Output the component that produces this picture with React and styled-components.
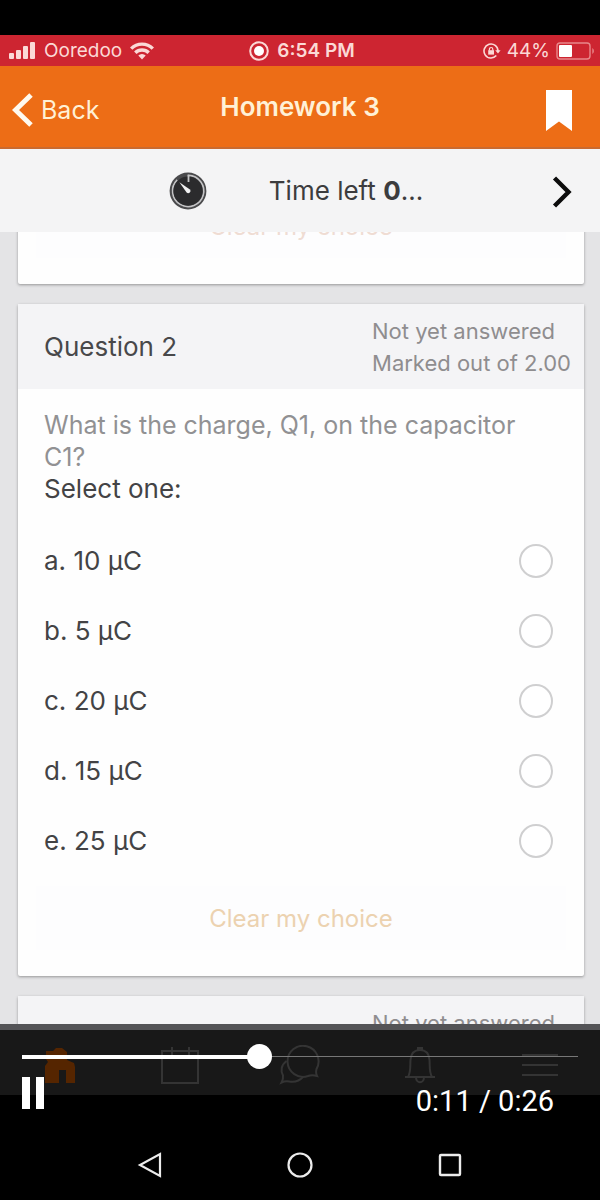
import React, { useState } from "react";
import styled, { createGlobalStyle } from "styled-components";

const GlobalStyle = createGlobalStyle`
  * {
    box-sizing: border-box;
  }

  body {
    margin: 0;
    background: #000000;
    font-family: Inter, "Liberation Sans", sans-serif;
  }

  button {
    border: none;
    background: none;
    padding: 0;
    font-family: inherit;
    color: inherit;
    cursor: pointer;
  }

  svg {
    display: block;
  }
`;

const Screen = styled.div`
  height: 100vh;
  padding-top: 35px;
  display: flex;
  flex-direction: column;
  background: #000000;
`;

/* ---------- status bar ---------- */

const StatusBar = styled.div`
  display: grid;
  grid-template-columns: 1fr auto 1fr;
  align-items: center;
  height: 31px;
  padding: 0 5px 0 9px;
  background: #cd2531;
  color: #fbd9d6;
  font-size: 19px;
`;

const StatusGroup = styled.div`
  display: flex;
  align-items: center;
  justify-content: ${(props) => props.$align || "flex-start"};
  gap: ${(props) => props.$gap || "8px"};
`;

const Clock = styled.span`
  font-weight: 600;
`;

/* ---------- header ---------- */

const Header = styled.header`
  display: grid;
  grid-template-columns: 1fr auto 1fr;
  align-items: center;
  height: 83px;
  padding: 0 28px 0 12px;
  background: #ed6d16;
  border-bottom: 2px solid #c96a30;
  color: #fff1d6;
`;

const BackButton = styled.button`
  display: flex;
  align-items: center;
  gap: 8px;
  padding-top: 6px;
  font-size: 25px;
`;

const Title = styled.h1`
  margin: 0;
  padding-left: 16px;
  font-size: 26px;
  font-weight: 600;
`;

const BookmarkButton = styled.button`
  justify-self: end;
  padding-top: 8px;
`;

/* ---------- timer ---------- */

const TimerBar = styled.div`
  display: grid;
  grid-template-columns: 1fr auto 1fr;
  align-items: center;
  flex-shrink: 0;
  height: 83px;
  padding: 0 28px 0 20px;
  background: #f4f4f5;
`;

const Timer = styled.div`
  grid-column: 2;
  display: flex;
  align-items: center;
  gap: 62px;
  font-size: 26px;
  color: #3c3c3e;
`;

const NextButton = styled.button`
  justify-self: end;
  padding-top: 2px;
`;

/* ---------- questions ---------- */

const QuestionList = styled.main`
  flex: 1;
  min-height: 0;
  overflow: hidden;
  padding: 0 16px 0 18px;
  display: flex;
  flex-direction: column;
  gap: 20px;
  background: #e4e4e6;
`;

const Card = styled.section`
  flex-shrink: 0;
  margin-top: ${(props) => (props.$scrolled ? "-48px" : "0")};
  padding-bottom: 26px;
  background: #fefefe;
  border-radius: 2px;
  box-shadow: 0 1px 3px rgba(0, 0, 0, 0.35);
`;

const CardHeader = styled.div`
  display: flex;
  align-items: center;
  justify-content: space-between;
  height: 85px;
  padding: 0 13px 0 26px;
  background: #f4f4f6;
`;

const QuestionNumber = styled.h2`
  margin: 0;
  font-size: 26px;
  font-weight: 400;
  color: #48484a;
`;

const QuestionState = styled.div`
  margin-left: auto;
  font-size: 22px;
  line-height: 32px;
  color: #8f8d8f;
`;

const QuestionBody = styled.fieldset`
  margin: 0;
  border: none;
  padding: 20px 26px 0;
  font-size: 26px;
  line-height: 32px;
`;

const QuestionText = styled.p`
  margin: 0;
  font-size: 25px;
  color: #919193;
`;

const Prompt = styled.p`
  margin: 0 0 21px;
  color: #434345;
`;

const Option = styled.label`
  display: flex;
  align-items: center;
  justify-content: space-between;
  height: 70px;
  padding-right: 5px;
  color: #434345;
`;

const Radio = styled.input`
  appearance: none;
  width: 34px;
  height: 34px;
  margin: 0;
  border: 2px solid #cfcfd0;
  border-radius: 50%;
  background: #ffffff;

  &:checked {
    border: 10px solid #ed6d16;
  }
`;

const ClearButton = styled.button`
  display: block;
  width: calc(100% - 36px);
  height: 64px;
  margin: 10px 18px 0;
  background: #fdfdfe;
  font-size: 24px;
  color: ${(props) => (props.$faded ? "#efdcd3" : "#ecd2b0")};
`;

/* ---------- player ---------- */

const Player = styled.div`
  position: relative;
  flex-shrink: 0;
  height: 106px;
`;

const TabBar = styled.nav`
  display: grid;
  grid-template-columns: repeat(5, 1fr);
  align-items: center;
  height: 71px;
  padding-top: 4px;
  border-top: 6px solid #545457;
  background: #181818;
`;

const Tab = styled.button`
  display: flex;
  justify-content: center;
  color: ${(props) => (props.$active ? "#552500" : "#343434")};
`;

const Controls = styled.div`
  position: absolute;
  inset: 20px 22px 0;
`;

const SeekBar = styled.input`
  appearance: none;
  display: block;
  width: 100%;
  height: 25px;
  margin: 0;
  background: linear-gradient(#ffffff, #ffffff) left center /
      ${(props) => props.$played}% 4px no-repeat,
    linear-gradient(#777777, #777777) center / 100% 1px no-repeat;

  &::-webkit-slider-thumb {
    appearance: none;
    width: 25px;
    height: 25px;
    border-radius: 50%;
    background: #ffffff;
  }
`;

const ControlsRow = styled.div`
  display: flex;
  align-items: flex-start;
  justify-content: space-between;
  margin-top: 8px;
  padding-right: 24px;
`;

const Time = styled.span`
  padding-top: 7px;
  font-family: Roboto, sans-serif;
  font-size: 29px;
  line-height: 34px;
  color: #ffffff;
`;

const SystemNav = styled.nav`
  display: grid;
  grid-template-columns: repeat(3, 1fr);
  align-items: center;
  justify-items: center;
  flex-shrink: 0;
  height: 70px;
  padding: 0 75px;
  color: #ececec;
`;

/* ---------- icons ---------- */

const SignalIcon = () => (
  <svg width="27" height="17" viewBox="0 0 27 17" fill="currentColor">
    <rect x="0" y="11" width="5" height="6" rx="1" />
    <rect x="7" y="8" width="5" height="9" rx="1" />
    <rect x="14" y="4" width="5" height="13" rx="1" />
    <rect x="21" y="0" width="5" height="17" rx="1" />
  </svg>
);

const WifiIcon = () => (
  <svg width="24" height="18" viewBox="0 0 24 18" fill="none" stroke="currentColor" strokeWidth="3.4">
    <path d="M1.2 6.6a15.3 15.3 0 0 1 21.6 0" />
    <path d="M5.3 10.8a9.5 9.5 0 0 1 13.4 0" />
    <path d="M12 17.4 8.3 13.6a5.3 5.3 0 0 1 7.4 0z" fill="currentColor" stroke="none" />
  </svg>
);

const RecordIcon = () => (
  <svg width="20" height="20" viewBox="0 0 20 20" fill="none" stroke="currentColor" strokeWidth="2">
    <circle cx="10" cy="10" r="8.8" />
    <circle cx="10" cy="10" r="5" fill="#ffffff" stroke="none" />
  </svg>
);

const RotationLockIcon = () => (
  <svg width="18" height="16" viewBox="0 0 18 16" fill="none" stroke="currentColor" strokeWidth="1.6">
    <path d="M13.3 12.6A7 7 0 1 1 15 8" />
    <path d="M12.2 7.2h5.4L15 10.6z" fill="currentColor" stroke="none" />
    <rect x="5.2" y="7.2" width="5.8" height="4.4" fill="currentColor" stroke="none" />
    <path d="M6.4 7.4V6.2a1.7 1.7 0 0 1 3.4 0v1.2" strokeWidth="1.2" />
  </svg>
);

const BatteryIcon = () => (
  <svg width="39" height="18" viewBox="0 0 39 18" fill="none">
    <rect x="1" y="1" width="33" height="16" rx="3" stroke="#e8878a" strokeWidth="1.4" />
    <rect x="3" y="3" width="13" height="12" rx="1" fill="#ffffff" />
    <path d="M36.3 6v6a3.6 3.6 0 0 0 0-6z" fill="#e8878a" />
  </svg>
);

const BackIcon = () => (
  <svg width="21" height="34" viewBox="0 0 21 34" fill="none" stroke="#fffaf0" strokeWidth="5">
    <path d="M19 2 3.5 17 19 32" />
  </svg>
);

const BookmarkIcon = () => (
  <svg width="26" height="41" viewBox="0 0 26 41" fill="#ffffff">
    <path d="M0 0h26v41L13 31.5 0 41z" />
  </svg>
);

const StopwatchIcon = () => (
  <svg width="38" height="38" viewBox="0 0 38 38" fill="none">
    <circle cx="19" cy="19" r="18.4" fill="#4a4a4c" />
    <path d="M19.5 10V3.4A15.6 15.6 0 1 1 8.2 7.9" stroke="#c4c4c6" strokeWidth="1.6" />
    <circle cx="19" cy="19" r="14.6" fill="#2b2b2d" />
    <path d="M19.5 2.8V10" stroke="#c4c4c6" strokeWidth="1.8" />
    <path d="M10.4 10.2 20.9 17.4a2.3 2.3 0 0 1-3.3 3.2z" fill="#f2f2f2" />
  </svg>
);

const NextIcon = () => (
  <svg width="20" height="32" viewBox="0 0 20 32" fill="none" stroke="#0c0c0c" strokeWidth="4.4">
    <path d="M2.5 2 16.5 16 2.5 30" />
  </svg>
);

const HomeIcon = () => (
  <svg width="34" height="38" viewBox="0 0 34 38" fill="currentColor">
    <path d="M3 5h7l3-3h6l5 4v8l7 3 1 4v16H23V24h-7v13H2V20l3-4-2-3z" />
  </svg>
);

const CalendarIcon = () => (
  <svg width="38" height="38" viewBox="0 0 38 38" fill="none" stroke="currentColor" strokeWidth="2">
    <path d="M1 5h36v32H1zM11 1v8M28 1v8" />
  </svg>
);

const ChatIcon = () => (
  <svg width="42" height="40" viewBox="0 0 42 40" fill="none" stroke="currentColor" strokeWidth="2">
    <path d="M37.500 24A15.500 15.500 0 1 0 29 31q4-1.500 9 0-1.500-3-.5-7z" />
    <path d="M7.500 16C2 20 1.500 26 4 30.500q.5 3-1.500 7 4-2 8-1 8 1.500 14-5" />
  </svg>
);

const BellIcon = () => (
  <svg width="34" height="38" viewBox="0 0 34 38" fill="none" stroke="currentColor" strokeWidth="2">
    <path d="M2 31h30M5 31c3-5 2-10 2.500-17C8 7 12 4 17 4s9 3 9.500 10c.5 7-.5 12 2.500 17" />
    <path d="M15 4V2h4v2M13 31c0 7 8 7 8 0" />
  </svg>
);

const MenuIcon = () => (
  <svg width="38" height="26" viewBox="0 0 38 26" fill="none" stroke="currentColor" strokeWidth="2">
    <path d="M1 3h36M1 13h36M1 23h36" />
  </svg>
);

const PauseIcon = () => (
  <svg width="22" height="32" viewBox="0 0 22 32" fill="#ffffff">
    <rect width="8" height="32" />
    <rect x="14" width="8" height="32" />
  </svg>
);

const PlayIcon = () => (
  <svg width="22" height="32" viewBox="0 0 22 32" fill="#ffffff">
    <path d="M0 0v32l22-16z" />
  </svg>
);

const NavBackIcon = () => (
  <svg width="26" height="26" viewBox="0 0 26 26" fill="none" stroke="currentColor" strokeWidth="2.200">
    <path d="M23 2v22L3 13z" />
  </svg>
);

const NavHomeIcon = () => (
  <svg width="26" height="26" viewBox="0 0 26 26" fill="none" stroke="currentColor" strokeWidth="2.200">
    <circle cx="13" cy="13" r="11.500" />
  </svg>
);

const NavRecentIcon = () => (
  <svg width="24" height="24" viewBox="0 0 24 24" fill="none" stroke="currentColor" strokeWidth="2.400">
    <rect x="2" y="2" width="20" height="20" rx="1" />
  </svg>
);

const options = [
  { id: "a", label: "a. 10 µC" },
  { id: "b", label: "b. 5 µC" },
  { id: "c", label: "c. 20 µC" },
  { id: "d", label: "d. 15 µC" },
  { id: "e", label: "e. 25 µC" },
];

const duration = 26;

const tabs = [
  { name: "Home", Icon: HomeIcon },
  { name: "Calendar", Icon: CalendarIcon },
  { name: "Messages", Icon: ChatIcon },
  { name: "Notifications", Icon: BellIcon },
  { name: "More", Icon: MenuIcon },
];

const formatTime = (seconds) => "0:" + String(seconds).padStart(2, "0");

export const App = () => {
  const [answer, setAnswer] = useState("");
  const [position, setPosition] = useState(11);
  const [playing, setPlaying] = useState(true);

  return (
    <>
      <GlobalStyle />
      <Screen>
        <StatusBar>
          <StatusGroup>
            <SignalIcon />
            <span>Ooredoo</span>
            <WifiIcon />
          </StatusGroup>
          <StatusGroup>
            <RecordIcon />
            <Clock>6:54 PM</Clock>
          </StatusGroup>
          <StatusGroup $align="flex-end" $gap="6px">
            <RotationLockIcon />
            <span>44%</span>
            <BatteryIcon />
          </StatusGroup>
        </StatusBar>

        <Header>
          <BackButton>
            <BackIcon />
            Back
          </BackButton>
          <Title>Homework 3</Title>
          <BookmarkButton aria-label="Bookmark">
            <BookmarkIcon />
          </BookmarkButton>
        </Header>

        <TimerBar>
          <Timer>
            <StopwatchIcon />
            <span>
              Time left <b>0</b>...
            </span>
          </Timer>
          <NextButton aria-label="Next">
            <NextIcon />
          </NextButton>
        </TimerBar>

        <QuestionList>
          <Card $scrolled>
            <ClearButton $faded>Clear my choice</ClearButton>
          </Card>

          <Card>
            <CardHeader>
              <QuestionNumber>Question 2</QuestionNumber>
              <QuestionState>
                Not yet answered
                <br />
                Marked out of 2.00
              </QuestionState>
            </CardHeader>
            <QuestionBody aria-label="Question 2">
              <QuestionText>What is the charge, Q1, on the capacitor C1?</QuestionText>
              <Prompt>Select one:</Prompt>
              {options.map((option) => (
                <Option key={option.id}>
                  {option.label}
                  <Radio
                    type="radio"
                    name="answer"
                    value={option.id}
                    checked={answer === option.id}
                    onChange={(event) => setAnswer(event.target.value)}
                  />
                </Option>
              ))}
            </QuestionBody>
            <ClearButton onClick={() => setAnswer("")}>Clear my choice</ClearButton>
          </Card>

          <Card>
            <CardHeader>
              <QuestionState>
                Not yet answered
                <br />
                Marked out of 2.00
              </QuestionState>
            </CardHeader>
          </Card>
        </QuestionList>

        <Player>
          <TabBar>
            {tabs.map(({ name, Icon }) => (
              <Tab key={name} aria-label={name} $active={name === "Home"}>
                <Icon />
              </Tab>
            ))}
          </TabBar>
          <Controls>
            <SeekBar
              type="range"
              aria-label="Seek"
              min="0"
              max={duration}
              value={position}
              $played={(position / duration) * 100}
              onChange={(event) => setPosition(Number(event.target.value))}
            />
            <ControlsRow>
              <button aria-label={playing ? "Pause" : "Play"} onClick={() => setPlaying(!playing)}>
                {playing ? <PauseIcon /> : <PlayIcon />}
              </button>
              <Time>
                {formatTime(position)} / {formatTime(duration)}
              </Time>
            </ControlsRow>
          </Controls>
        </Player>

        <SystemNav>
          <button aria-label="System back">
            <NavBackIcon />
          </button>
          <button aria-label="System home">
            <NavHomeIcon />
          </button>
          <button aria-label="Recent apps">
            <NavRecentIcon />
          </button>
        </SystemNav>
      </Screen>
    </>
  );
};

export default App;
